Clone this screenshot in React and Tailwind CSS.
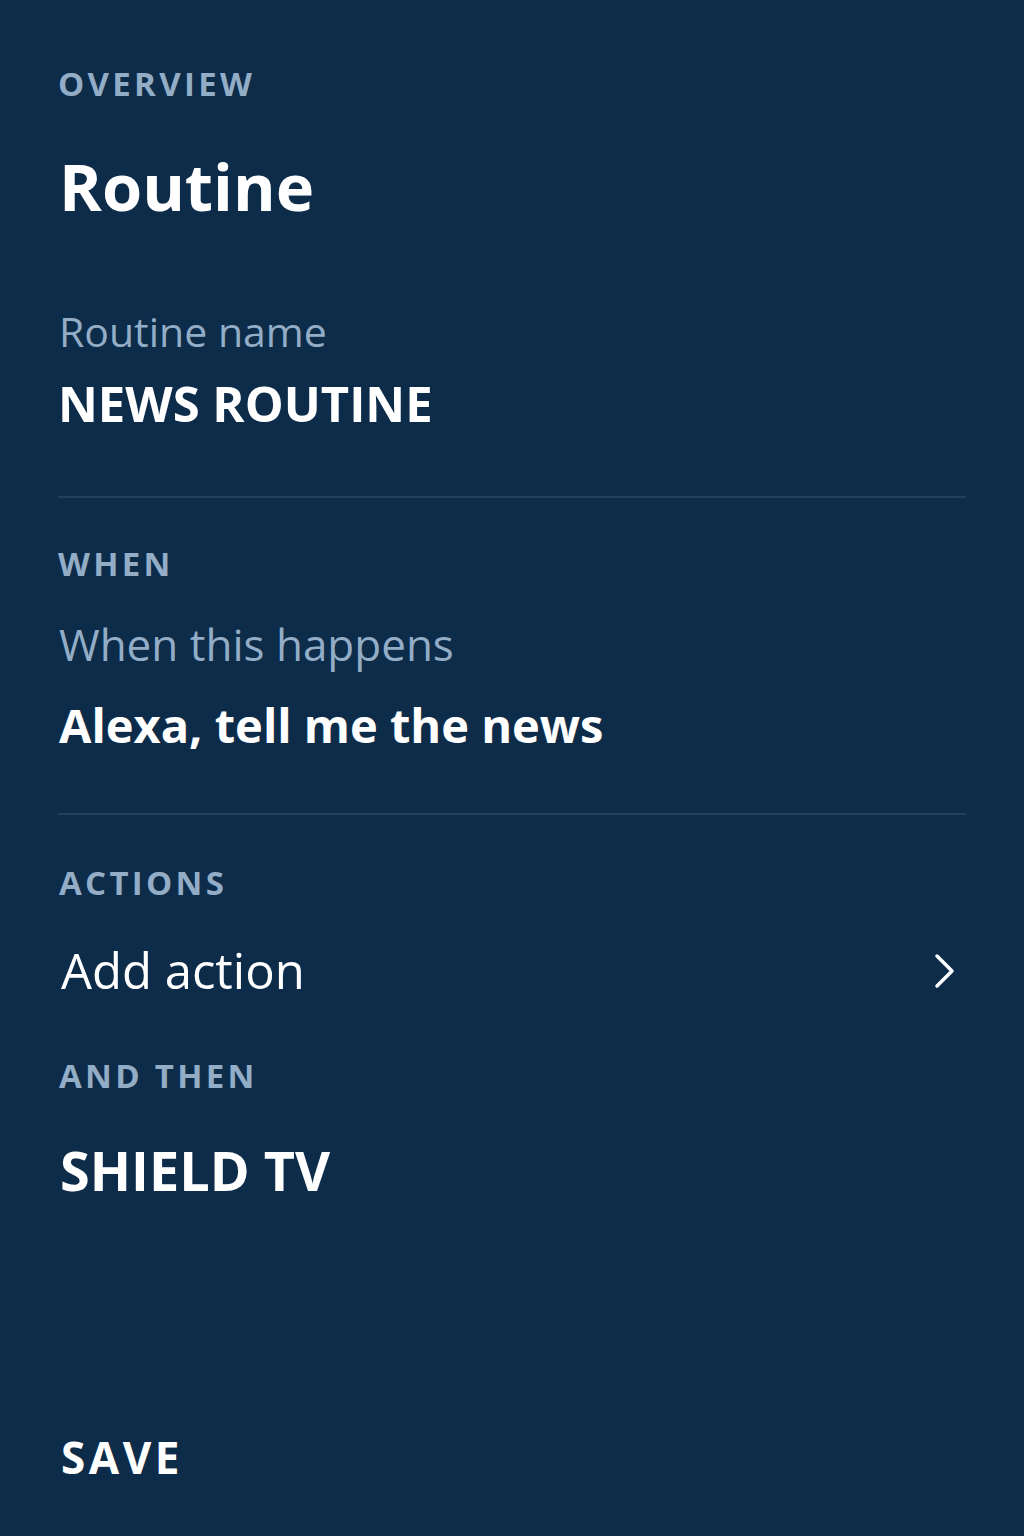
const Label = ({ children, className = '' }) => (
  <p className={`text-[33px] leading-none font-bold tracking-[0.1em] text-[#93adc6] ${className}`}>
    {children}
  </p>
);

const Divider = ({ className = '' }) => <div className={`h-[2px] bg-[#233f5c] ${className}`} />;

export default function App() {
  return (
    <div
      className="min-h-[1536px] bg-[#0d2c4a] flex flex-col px-[58px] pt-[67px] pb-[57px] text-white"
      style={{ fontFamily: '"Open Sans", "Noto Sans", sans-serif' }}
    >
      <Label>OVERVIEW</Label>
      <h1 className="mt-[54px] text-[65px] leading-none font-bold ml-[1px]">Routine</h1>

      <p className="mt-[92px] text-[41px] leading-none text-[#93adc6] ml-[1px]">Routine name</p>
      <p className="mt-[27px] text-[49px] leading-none font-bold">NEWS ROUTINE</p>

      <Divider className="mt-[68px]" />

      <Label className="mt-[49px]">WHEN</Label>
      <p className="mt-[42px] text-[44px] leading-none text-[#93adc6] ml-[1px]">When this happens</p>
      <p className="mt-[36px] text-[47px] leading-none font-bold ml-[1px]">Alexa, tell me the news</p>

      <Divider className="mt-[64px]" />

      <Label className="mt-[51px] ml-[1px]">ACTIONS</Label>
      <div className="mt-[47px] flex items-center justify-between mr-[10px]">
        <span className="text-[49px] leading-none ml-[3px]">Add action</span>
        <svg width="24" height="38" viewBox="0 0 24 38" fill="none">
          <path d="M5 4 L20 19 L5 34" stroke="white" strokeWidth="3.5" strokeLinecap="round" strokeLinejoin="round" />
        </svg>
      </div>

      <Label className="mt-[64px] ml-[1px]">AND THEN</Label>
      <p className="mt-[51px] text-[54px] leading-none font-bold ml-[2px]">SHIELD TV</p>

      <div className="flex-1" />
      <button className="self-start text-[44px] leading-none font-bold tracking-[0.08em] ml-[3px]">SAVE</button>
    </div>
  );
}
